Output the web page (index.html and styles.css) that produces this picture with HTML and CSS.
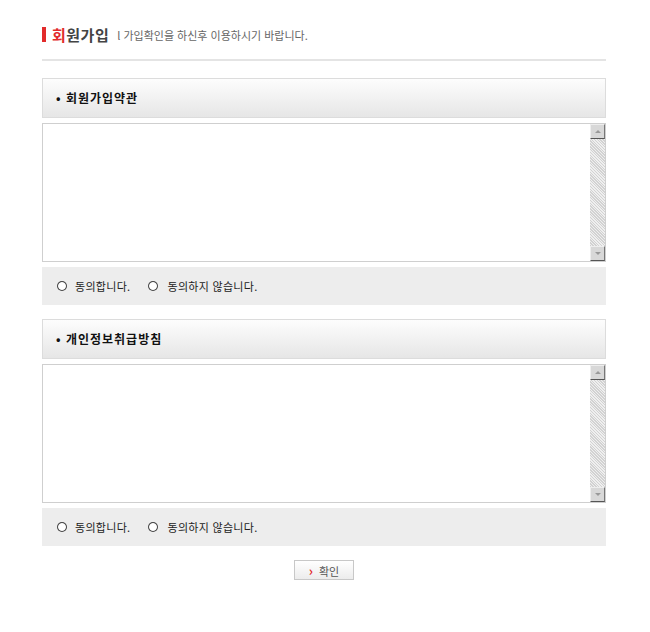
FILE: index.html
```html
<!DOCTYPE html>
<html lang="ko">
<head>
    <meta charset="UTF-8">
    <title>회원가입</title>
    <link rel="stylesheet" href="styles.css">
</head>
<body>
    <div class="join-wrap">
        <div class="page-title">
            <span class="title-bar"></span>
            <h2><em>회</em>원가입</h2>
            <span class="title-desc">l 가입확인을 하신후 이용하시기 바랍니다.</span>
        </div>

        <div class="agree-section">
            <div class="section-head">• 회원가입약관</div>
            <div class="terms-box">
                <div class="terms-text"></div>
                <div class="scroll-bar">
                    <span class="scroll-btn up"></span>
                    <span class="scroll-track"></span>
                    <span class="scroll-btn down"></span>
                </div>
            </div>
            <div class="agree-row">
                <label><span class="radio"></span>동의합니다.</label>
                <label><span class="radio"></span>동의하지 않습니다.</label>
            </div>
        </div>

        <div class="agree-section">
            <div class="section-head">• 개인정보취급방침</div>
            <div class="terms-box">
                <div class="terms-text"></div>
                <div class="scroll-bar">
                    <span class="scroll-btn up"></span>
                    <span class="scroll-track"></span>
                    <span class="scroll-btn down"></span>
                </div>
            </div>
            <div class="agree-row">
                <label><span class="radio"></span>동의합니다.</label>
                <label><span class="radio"></span>동의하지 않습니다.</label>
            </div>
        </div>

        <div class="btn-area">
            <button class="confirm-button" type="button"><span class="arrow">›</span>확인</button>
        </div>
    </div>
</body>
</html>
```

FILE: styles.css
```css
body {
    margin: 0;
    background-color: #fff;
    font-family: "Noto Sans CJK KR", "Noto Sans", sans-serif;
    font-size: 11px;
    color: #333;
}

.join-wrap {
    width: 564px;
    margin-left: 42px;
    padding-top: 24px;
}

.page-title {
    display: flex;
    align-items: center;
    height: 20px;
    padding-bottom: 15px;
    border-bottom: 2px solid #e4e4e4;
}

.title-bar {
    width: 4px;
    height: 15px;
    background-color: #e22b2b;
    margin-right: 6px;
}

.page-title h2 {
    margin: 0;
    font-size: 15px;
    font-weight: bold;
    color: #444;
    letter-spacing: 0.5px;
}

.page-title h2 em {
    font-style: normal;
    color: #e22b2b;
}

.title-desc {
    margin-left: 8px;
    margin-top: 2px;
    font-size: 11px;
    color: #666;
}

.agree-section {
    margin-top: 17px;
}

.agree-section + .agree-section {
    margin-top: 14px;
}

.section-head {
    height: 38px;
    line-height: 37px;
    padding-left: 13px;
    border: 1px solid #dcdcdc;
    background: linear-gradient(#fdfdfd, #e6e6e6);
    font-size: 12px;
    font-weight: bold;
    letter-spacing: 1px;
    color: #111;
}

.terms-box {
    display: flex;
    height: 137px;
    margin-top: 5px;
    border: 1px solid #cfcfcf;
    background-color: #fff;
}

.terms-text {
    flex: 1;
}

.scroll-bar {
    display: flex;
    flex-direction: column;
    width: 15px;
}

.scroll-btn {
    height: 13px;
    background-color: #d8d8d8;
    border: 1px solid #eee;
    border-right-color: #777;
    border-bottom-color: #555;
    position: relative;
}

.scroll-btn.up::after,
.scroll-btn.down::after {
    content: "";
    position: absolute;
    left: 4px;
    top: 5px;
    border-left: 3px solid transparent;
    border-right: 3px solid transparent;
}

.scroll-btn.up::after {
    border-bottom: 3px solid #999;
}

.scroll-btn.down::after {
    border-top: 3px solid #999;
}

.scroll-track {
    flex: 1;
    background-color: #e8e8e8;
    background-image: repeating-linear-gradient(45deg, #d2d2d2 0, #d2d2d2 1px, #efefef 1px, #efefef 2px);
}

.agree-row {
    display: flex;
    align-items: center;
    height: 38px;
    margin-top: 5px;
    padding-left: 16px;
    background-color: #ededed;
    font-size: 11px;
    letter-spacing: 0.3px;
    color: #222;
}

.agree-row label {
    display: flex;
    align-items: center;
    margin-right: 19px;
}

.radio {
    width: 6px;
    height: 6px;
    margin-right: 9px;
    border: 1px solid #fff;
    border-radius: 50%;
    box-shadow: 0 0 0 1px #444;
    background-color: #fff;
}

.agree-row label + label .radio {
    margin-right: 10px;
}

.btn-area {
    margin-top: 14px;
    text-align: center;
}

.confirm-button {
    width: 60px;
    height: 20px;
    padding: 0;
    border: 1px solid #c8c8c8;
    background: linear-gradient(#ffffff, #ececec);
    font-family: "Noto Sans CJK KR", sans-serif;
    font-size: 11px;
    color: #555;
    cursor: pointer;
}

.confirm-button .arrow {
    color: #e22b2b;
    font-weight: bold;
    font-size: 13px;
    margin-right: 6px;
}
```
